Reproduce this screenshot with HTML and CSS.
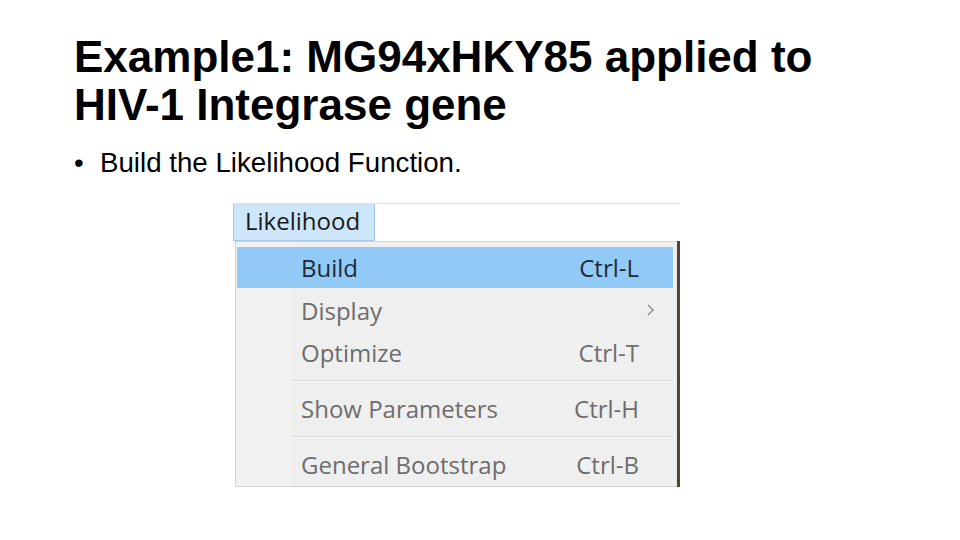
FILE: index.html
```html
<!DOCTYPE html>
<html>
<head>
<meta charset="utf-8">
<link rel="stylesheet" href="styles.css">
</head>
<body>
<div class="slide">
  <h1 class="title">Example1: MG94xHKY85 applied to<br>HIV-1 Integrase gene</h1>
  <ul class="bullets">
    <li><span class="dot">•</span><span>Build the Likelihood Function.</span></li>
  </ul>
  <div class="shot">
    <div class="menubar">
      <div class="tab">Likelihood</div>
    </div>
    <div class="menuwrap">
      <div class="menu">
        <div class="item active"><span class="label">Build</span><span class="key">Ctrl-L</span></div>
        <div class="item"><span class="label">Display</span><span class="key arrow"><svg width="10" height="16" viewBox="0 0 10 16"><path d="M3 3 L8 8 L3 13" fill="none" stroke="#8a8a8a" stroke-width="1.4"/></svg></span></div>
        <div class="item"><span class="label">Optimize</span><span class="key">Ctrl-T</span></div>
        <div class="sep"></div>
        <div class="item"><span class="label">Show Parameters</span><span class="key">Ctrl-H</span></div>
        <div class="sep"></div>
        <div class="item"><span class="label">General Bootstrap</span><span class="key">Ctrl-B</span></div>
      </div>
      <div class="edge"></div>
    </div>
  </div>
</div>
</body>
</html>
```

FILE: styles.css
```css
html, body {
  margin: 0;
  padding: 0;
  background: #ffffff;
}
.slide {
  width: 960px;
  height: 540px;
  overflow: hidden;
  background: #ffffff;
  font-family: "Liberation Sans", Arial, sans-serif;
  color: #000;
}
.title {
  margin: 0;
  padding: 33px 0 0 74px;
  font-size: 44px;
  line-height: 48px;
  font-weight: bold;
}
.bullets {
  list-style: none;
  margin: 0;
  padding: 17px 0 0 74px;
  font-size: 27.7px;
  line-height: 34px;
}
.bullets li {
  display: flex;
}
.dot {
  width: 26px;
}
.shot {
  margin: 23px 0 0 233px;
  width: 447px;
  font-family: "Open Sans", "Noto Sans", sans-serif;
  font-size: 24px;
}
.menubar {
  height: 37px;
  border-top: 1px solid #f3d8c5;
  background: #fff;
  display: flex;
}
.tab {
  width: 142px;
  box-sizing: border-box;
  background: #cde6f9;
  border: 1px solid #a3c9e8;
  border-top: none;
  color: #1a1a1a;
  padding-left: 11px;
  line-height: 34px;
}
.menuwrap {
  display: flex;
  height: 246px;
}
.menu {
  margin-left: 2px;
  width: 442px;
  box-sizing: border-box;
  background: #f0f0f0;
  border: 1px solid #d4d4d4;
  border-right-color: #e6e6e6;
  padding: 5px 3px 2px 1px;
  background-image: linear-gradient(to right, #f2f2f2 0, #f2f2f2 55px, #efefef 55px);
}
.edge {
  width: 3px;
  background: #4f4538;
}
.item {
  display: flex;
  align-items: center;
  height: 42px;
  padding: 0 34px 0 64px;
  color: #6d6d6d;
}
.item.active {
  height: 41px;
  margin-bottom: 1px;
  background: #91c9f7;
  color: #1f2a36;
}
.label {
  flex: 1;
}
.key {
  text-align: right;
}
.arrow {
  margin-right: -16px;
  display: flex;
}
.sep {
  height: 14px;
  margin-left: 55px;
  box-sizing: border-box;
  padding-top: 7px;
}
.sep::before {
  content: "";
  display: block;
  height: 1px;
  background: #d5d5d5;
  border-bottom: 1px solid #fbfbfb;
}
```
